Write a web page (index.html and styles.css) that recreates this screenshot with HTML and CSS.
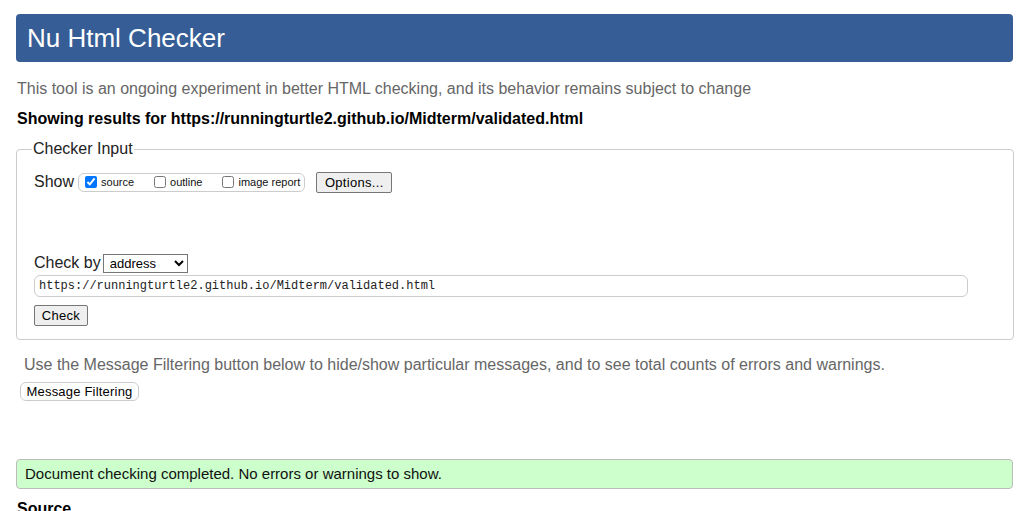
FILE: index.html
```html
<!DOCTYPE html>
<html lang="en">
<head>
<meta charset="utf-8">
<title>Showing results for https://runningturtle2.github.io/Midterm/validated.html - Nu Html Checker</title>
<link rel="stylesheet" href="styles.css">
</head>
<body>
<h1 class="masthead"><span>Nu Html Checker</span></h1>
<p class="intro">This tool is an ongoing experiment in better HTML checking, and its behavior remains subject to change</p>
<p class="results-for">Showing results for https://runningturtle2.github.io/Midterm/validated.html</p>
<form class="checker-form">
  <fieldset class="checker-input">
    <legend>Checker Input</legend>
    <div class="show-row">
      <span class="label-big">Show</span>
      <fieldset class="show-options">
        <label class="opt"><input type="checkbox" checked> source</label>
        <label class="opt"><input type="checkbox"> outline</label>
        <label class="opt"><input type="checkbox"> image report</label>
      </fieldset>
      <button type="button" class="btn btn-options">Options...</button>
    </div>
    <div class="checkby-row">
      <span class="label-big">Check by</span>
      <select class="sel"><option>address</option></select>
    </div>
    <div class="url-row">
      <input class="url" type="url" value="https://runningturtle2.github.io/Midterm/validated.html">
    </div>
    <div class="submit-row">
      <button type="button" class="btn btn-check">Check</button>
    </div>
  </fieldset>
</form>
<p class="filter-note">Use the Message Filtering button below to hide/show particular messages, and to see total counts of errors and warnings.</p>
<div class="filter-row"><button type="button" class="filter-btn">Message Filtering</button></div>
<p class="success">Document checking completed. No errors or warnings to show.</p>
<h2 class="source">Source</h2>
</body>
</html>
```
FILE: styles.css
```css
html, body {
  margin: 0;
  padding: 0;
  background: #fff;
}
body {
  font-family: "Liberation Sans", Arial, sans-serif;
  font-size: 16px;
  color: #000;
  padding: 14px 10px 0 16px;
}
.masthead {
  margin: 0;
  height: 48px;
  background: #365d95;
  border-radius: 4px;
  color: #fff;
  font-weight: normal;
  font-size: 26px;
  line-height: 48px;
  padding-left: 11px;
}
.intro {
  margin: 17px 0 0 1px;
  color: #666;
  line-height: 20px;
}
.results-for {
  margin: 10px 0 0 1px;
  font-weight: bold;
  line-height: 20px;
}
.checker-form {
  margin-top: 11px;
}
.checker-input {
  margin: 0;
  border: 1px solid #ccc;
  border-radius: 4px;
  padding: 12px 45px 13px 17px;
  min-height: 0;
}
.checker-input legend {
  padding: 0 1px;
  margin-left: -2px;
  font-size: 16px;
  line-height: 18px;
  color: #222;
}
.show-row {
  display: flex;
  align-items: center;
  height: 22px;
  margin-top: 1px;
}
.label-big {
  font-size: 16px;
  color: #222;
}
.show-options {
  display: flex;
  align-items: center;
  margin: 0 0 0 4px;
  padding: 0 4px 0 6px;
  height: 17px;
  border: 1px solid #ccc;
  border-radius: 6px;
  font-size: 11px;
  gap: 0;
}
.opt {
  display: flex;
  align-items: center;
  margin-right: 20px;
  color: #111;
}
.opt:last-child {
  margin-right: 0;
}
.opt input {
  margin: 0 4px 0 0;
  width: 12px;
  height: 12px;
  accent-color: #0075ff;
}
.btn {
  font-family: "Liberation Sans", Arial, sans-serif;
  font-size: 13px;
  padding: 1px 0;
  height: 21px;
  background: #efefef;
  border: 1px solid #767676;
  border-radius: 2px;
  color: #000;
  letter-spacing: 0.3px;
}
.btn-options {
  margin-left: 11px;
  width: 76px;
}
.btn-check {
  width: 54px;
}
.checkby-row {
  display: flex;
  align-items: center;
  margin-top: 61px;
  height: 18px;
}
.sel {
  margin-left: 2px;
  width: 85px;
  height: 19px;
  font-family: "Liberation Sans", Arial, sans-serif;
  font-size: 13px;
  border: 1px solid #767676;
  border-radius: 0;
  background: #fff;
  padding: 0 2px;
}
.url-row {
  margin-top: 3px;
}
.url {
  box-sizing: border-box;
  width: 934px;
  height: 22px;
  border: 1px solid #ccc;
  border-radius: 6px;
  padding: 0 4px;
  font-family: "Liberation Mono", "Courier New", monospace;
  font-size: 12px;
  color: #222;
}
.submit-row {
  margin-top: 8px;
}
.filter-note {
  margin: 15px 0 0 8px;
  color: #666;
  line-height: 20px;
}
.filter-row {
  margin-top: 7px;
  margin-left: 4px;
}
.filter-btn {
  font-family: "Liberation Sans", Arial, sans-serif;
  font-size: 13px;
  height: 19px;
  width: 119px;
  padding: 0;
  background: #fff;
  border: 1px solid #ccc;
  border-radius: 6px;
  color: #000;
  letter-spacing: 0.2px;
}
.success {
  margin: 58px 0 0 0;
  background: #ccffcc;
  border: 1px solid #bbb;
  border-radius: 4px;
  height: 28px;
  line-height: 28px;
  padding-left: 8px;
  font-size: 15px;
  color: #111;
}
.source {
  margin: 10px 0 0 1px;
  font-size: 16px;
  line-height: 20px;
}
```
